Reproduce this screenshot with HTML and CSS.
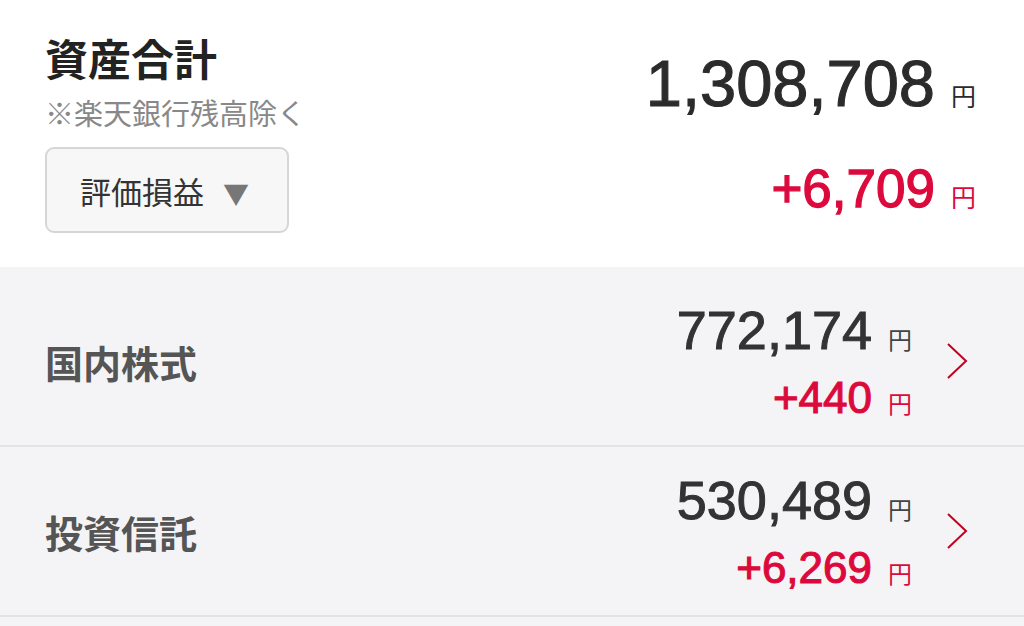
FILE: index.html
```html
<!DOCTYPE html>
<html lang="ja">

<head>
    <meta charset="UTF-8">
    <meta name="viewport" content="width=device-width, initial-scale=1.0">
    <title>資産合計</title>
    <link rel="stylesheet" href="styles.css">
</head>

<body>
    <div class="summary">
        <div class="summary-left">
            <h1 class="title">資産合計</h1>
            <p class="note">※楽天銀行残高除く</p>
            <button class="select">評価損益 <span class="caret">▼</span></button>
        </div>
        <div class="summary-right">
            <div class="total">1,308,708<span class="unit">円</span></div>
            <div class="total-gain">+6,709<span class="unit">円</span></div>
        </div>
    </div>

    <ul class="list">
        <li class="row">
            <span class="label">国内株式</span>
            <div class="values">
                <div class="amount">772,174<span class="unit">円</span></div>
                <div class="gain">+440<span class="unit">円</span></div>
            </div>
            <svg class="chevron" width="22" height="38" viewBox="0 0 22 38">
                <polyline points="2,2 20,19 2,36" fill="none" stroke="#c4001f" stroke-width="2" />
            </svg>
        </li>
        <li class="row">
            <span class="label">投資信託</span>
            <div class="values">
                <div class="amount">530,489<span class="unit">円</span></div>
                <div class="gain">+6,269<span class="unit">円</span></div>
            </div>
            <svg class="chevron" width="22" height="38" viewBox="0 0 22 38">
                <polyline points="2,2 20,19 2,36" fill="none" stroke="#c4001f" stroke-width="2" />
            </svg>
        </li>
    </ul>
</body>

</html>
```

FILE: styles.css
```css
body {
    margin: 0;
    background-color: #f4f4f6;
    color: #333;
    font-family: "Liberation Sans", "Noto Sans CJK JP", sans-serif;
}

.summary {
    background-color: #fff;
    height: 267px;
    box-sizing: border-box;
    padding: 36px 48px 0 45px;
    display: flex;
    justify-content: space-between;
}

.title {
    margin: 0;
    font-family: "Noto Sans CJK JP", sans-serif;
    font-size: 43px;
    font-weight: bold;
    line-height: 1;
    color: #222;
}

.note {
    margin: 19px 0 0;
    font-family: "Noto Sans CJK JP", sans-serif;
    font-size: 29px;
    line-height: 1;
    color: #888;
}

.select {
    margin-top: 20px;
    width: 244px;
    height: 86px;
    border: 2px solid #d6d6d6;
    border-radius: 9px;
    background-color: #f7f7f7;
    font-family: "Noto Sans CJK JP", sans-serif;
    font-size: 31px;
    color: #333;
    text-align: left;
    padding: 0 0 0 33px;
}

.caret {
    color: #777;
    font-size: 26px;
    margin-left: 12px;
}

.summary-right {
    display: flex;
    flex-direction: column;
    align-items: flex-end;
    padding-top: 15px;
}

.total {
    font-size: 65px;
    line-height: 1;
    color: #2b2b2b;
    -webkit-text-stroke: 1.1px #2b2b2b;
}

.total-gain {
    margin-top: 46px;
    font-size: 53px;
    line-height: 1;
    color: #dc0a3c;
    -webkit-text-stroke: 1.3px #dc0a3c;
}

.unit {
    font-family: "Noto Sans CJK JP", sans-serif;
    font-size: 25px;
    margin-left: 16px;
    -webkit-text-stroke: 0;
}

.list {
    list-style: none;
    margin: 0;
    padding: 10px 0 0;
}

.row {
    height: 168px;
    border-bottom: 2px solid #e3e3e6;
    display: flex;
    align-items: center;
    padding: 0 56px 0 45px;
}

.label {
    font-family: "Noto Sans CJK JP", sans-serif;
    font-size: 38px;
    font-weight: bold;
    color: #555;
    flex: 1;
}

.values {
    display: flex;
    flex-direction: column;
    align-items: flex-end;
    gap: 19px;
}

.amount {
    font-size: 54px;
    line-height: 1;
    color: #333;
    -webkit-text-stroke: 1px #333;
}

.gain {
    font-size: 44px;
    line-height: 1;
    color: #dc0a3c;
    -webkit-text-stroke: 1.1px #dc0a3c;
}

.values .unit {
    font-size: 24px;
    color: #444;
}

.gain .unit {
    color: #dc0a3c;
}

.chevron {
    margin-left: 34px;
}
```
